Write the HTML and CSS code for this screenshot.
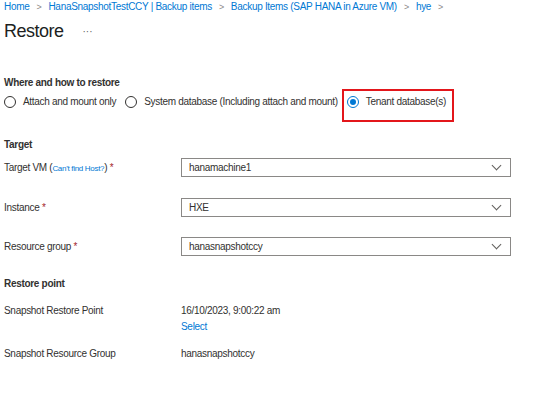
FILE: index.html
```html
<!DOCTYPE html>
<html lang="en">
<head>
  <meta charset="UTF-8">
  <title>Restore</title>
  <link rel="stylesheet" href="styles.css">
</head>
<body>
  <nav class="breadcrumb">
    <a href="#">Home</a><span class="sep">&gt;</span>
    <a href="#">HanaSnapshotTestCCY | Backup items</a><span class="sep">&gt;</span>
    <a href="#">Backup Items (SAP HANA in Azure VM)</a><span class="sep">&gt;</span>
    <a href="#">hye</a><span class="sep">&gt;</span>
  </nav>

  <div class="title-row">
    <h1>Restore</h1>
    <span class="more">&middot;&middot;&middot;</span>
  </div>

  <h2 class="section first">Where and how to restore</h2>
  <div class="radios">
    <label class="radio"><span class="dot"></span>Attach and mount only</label>
    <label class="radio"><span class="dot"></span>System database (Including attach and mount)</label>
    <label class="radio checked highlight"><span class="dot"></span>Tenant database(s)</label>
  </div>

  <h2 class="section target">Target</h2>
  <div class="form">
    <div class="row">
      <div class="label">Target VM (<a href="#" class="small-link">Can't find Host?</a>) <span class="req">*</span></div>
      <div class="select">hanamachine1<span class="chev"></span></div>
    </div>
    <div class="row">
      <div class="label">Instance <span class="req">*</span></div>
      <div class="select">HXE<span class="chev"></span></div>
    </div>
    <div class="row">
      <div class="label">Resource group <span class="req">*</span></div>
      <div class="select">hanasnapshotccy<span class="chev"></span></div>
    </div>
  </div>

  <h2 class="section point">Restore point</h2>
  <div class="info">
    <div class="info-row">
      <div class="label">Snapshot Restore Point</div>
      <div class="value">16/10/2023, 9:00:22 am<br><a href="#" class="link">Select</a></div>
    </div>
    <div class="info-row">
      <div class="label">Snapshot Resource Group</div>
      <div class="value">hanasnapshotccy</div>
    </div>
  </div>
</body>
</html>
```

FILE: styles.css
```css
/* Page base */
body {
  margin: 0;
  padding: 0 4px;
  font-family: 'Liberation Sans', Arial, sans-serif;
  font-size: 10px;
  letter-spacing: -0.3px;
  color: #323130;
  background: #ffffff;
}

a {
  color: #0078d4;
  text-decoration: none;
}

/* Breadcrumb */
.breadcrumb {
  height: 14px;
  line-height: 14px;
  display: flex;
  align-items: center;
}

.sep {
  color: #8a8886;
  margin: 0 7px;
  font-size: 9px;
}

/* Title */
.title-row {
  display: flex;
  align-items: center;
  height: 22px;
  margin-top: 6px;
}

h1 {
  margin: 0;
  font-size: 18px;
  font-weight: 400;
  letter-spacing: -0.5px;
  color: #201f1e;
}

.more {
  margin-left: 19px;
  font-size: 10px;
  letter-spacing: 0;
  color: #605e5c;
}

/* Section headings */
.section {
  margin: 0;
  font-size: 10px;
  font-weight: 700;
  line-height: 14px;
}

.section.first { margin-top: 34px; }
.section.target { margin-top: 29px; }
.section.point { margin-top: 21px; }

/* Radio group */
.radios {
  display: flex;
  align-items: center;
  margin-top: 5px;
  height: 14px;
}

.radio {
  display: flex;
  align-items: center;
  height: 14px;
  line-height: 14px;
  margin-right: 9px;
  position: relative;
}

.dot {
  width: 12px;
  height: 12px;
  border: 1px solid #323130;
  border-radius: 50%;
  margin-right: 7px;
  box-sizing: border-box;
  position: relative;
}

.radio.checked .dot {
  border-color: #0078d4;
}

.radio.checked .dot::after {
  content: "";
  position: absolute;
  left: 2px;
  top: 2px;
  width: 6px;
  height: 6px;
  border-radius: 50%;
  background: #0078d4;
}

/* Red annotation box */
.highlight::after {
  content: "";
  position: absolute;
  left: -5px;
  top: -6px;
  width: 112px;
  height: 33px;
  border: 2px solid #e3161b;
  box-sizing: border-box;
}

/* Form rows */
.form {
  display: flex;
  flex-direction: column;
  gap: 20.5px;
  margin-top: 6px;
}

.row {
  display: flex;
  align-items: center;
}

.label {
  width: 177px;
  flex-shrink: 0;
}

.small-link {
  font-size: 8px;
}

.req {
  color: #a4262c;
}

.select {
  width: 330px;
  height: 19px;
  box-sizing: border-box;
  border: 1px solid #8a8886;
  padding: 0 7px;
  display: flex;
  align-items: center;
  justify-content: space-between;
}

.chev {
  width: 6px;
  height: 6px;
  border-right: 1px solid #605e5c;
  border-bottom: 1px solid #605e5c;
  transform: rotate(45deg);
  margin: -4px 3px 0 0;
}

/* Restore point info */
.info {
  margin-top: 12px;
  display: flex;
  flex-direction: column;
  gap: 12px;
}

.info-row {
  display: flex;
  line-height: 15px;
}

.link {
  display: inline-block;
  margin-top: 1px;
}
```
